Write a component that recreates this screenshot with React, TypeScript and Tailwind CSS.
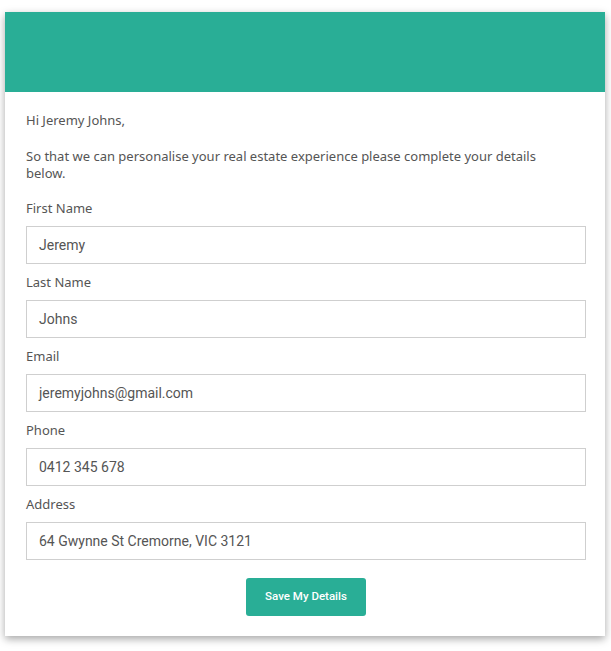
import React from "react";

const fields = [
  { label: "First Name", value: "Jeremy" },
  { label: "Last Name", value: "Johns" },
  { label: "Email", value: "jeremyjohns@gmail.com" },
  { label: "Phone", value: "0412 345 678" },
  { label: "Address", value: "64 Gwynne St Cremorne, VIC 3121" },
];

export default function App() {
  return (
    <div className="min-h-[651px] w-[611px] bg-white pt-[12px] pl-[5px]" style={{ fontFamily: '"Noto Sans", "Open Sans", sans-serif' }}>
      <div className="w-[600px] bg-white shadow-[0_3px_8px_rgba(0,0,0,0.35)]">
        <div className="h-[80px] bg-[#29ae96]" />
        <div className="pl-[21px] pr-[19px] pb-[20px]">
          <div className="pt-[18px] text-[13px] leading-[20px] text-[#555]">Hi Jeremy Johns,</div>
          <div className="mt-[18px] max-w-[540px] text-[13px] leading-[17px] text-[#555]">
            So that we can personalise your real estate experience please complete your details below.
          </div>
          <div className="mt-[8px]">
            {fields.map((f) => (
              <div key={f.label}>
                <div className="pt-[9px] pb-[9px] text-[13px] leading-[18px] text-[#555]">{f.label}</div>
                <div
                  className="flex h-[38px] w-[560px] items-center border border-[#cfcfcf] pl-[12px] text-[14px] text-[#555]"
                  style={{ fontFamily: 'Roboto, sans-serif' }}
                >
                  {f.value}
                </div>
              </div>
            ))}
          </div>
          <div className="mt-[18px] flex justify-center">
            <button
              className="h-[38px] w-[120px] rounded-[3px] bg-[#29ae96] text-[11.5px] font-medium text-white"
              style={{ fontFamily: 'Roboto, sans-serif' }}
            >
              Save My Details
            </button>
          </div>
        </div>
      </div>
    </div>
  );
}
